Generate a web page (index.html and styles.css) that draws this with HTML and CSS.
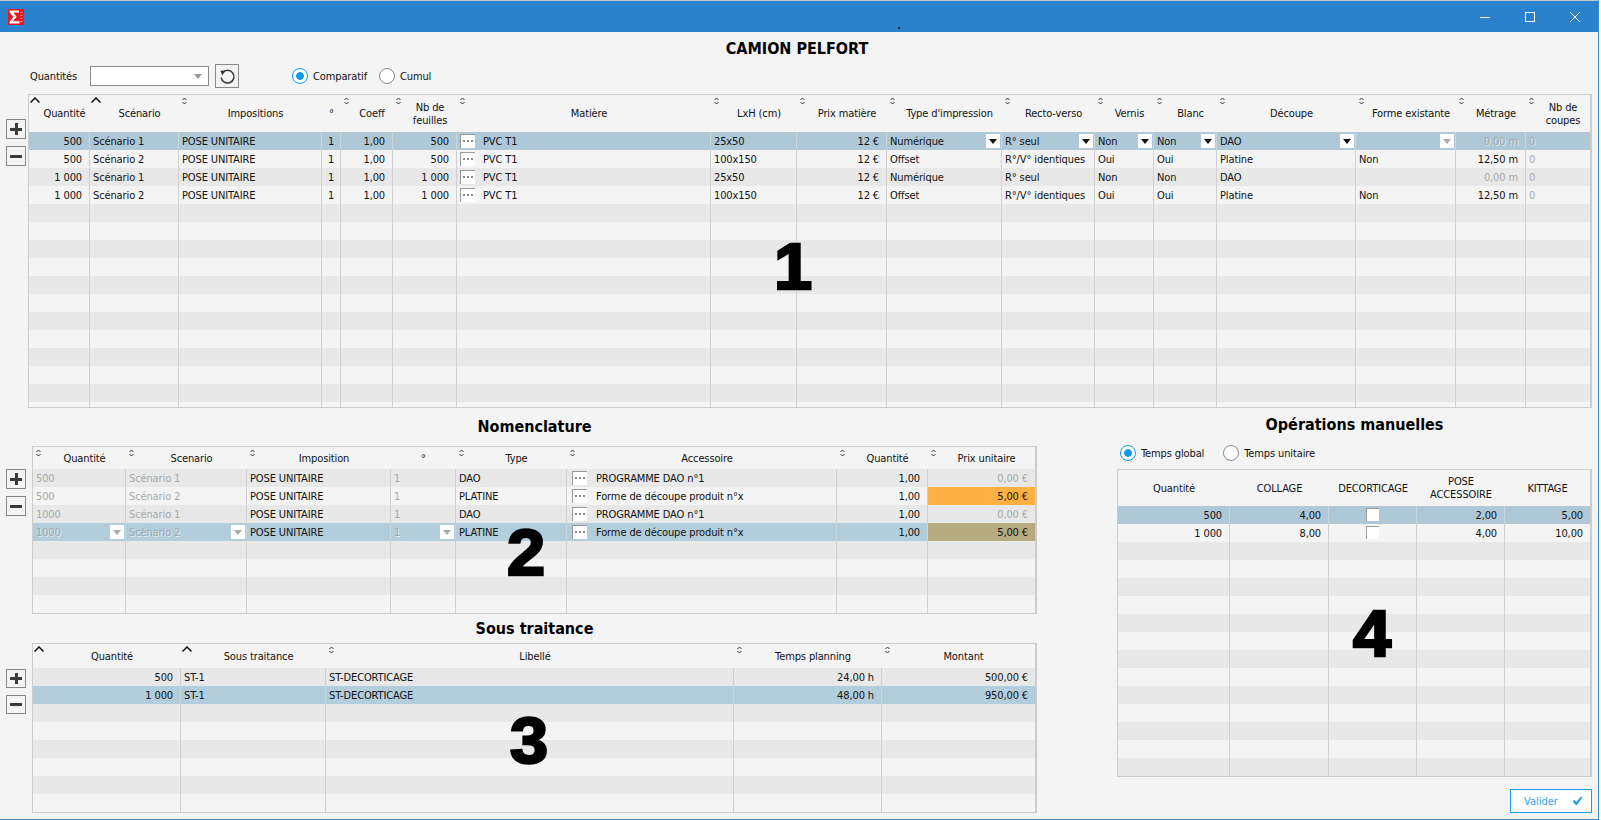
FILE: index.html
```html
<!DOCTYPE html>
<html>
<head>
<title>Camion Pelfort</title>
<link rel="stylesheet" href="styles.css">
</head>
<body>

<svg class="defs" width="0" height="0">
  <symbol id="sort" viewBox="0 0 5 8"><path d="M.5 3 2.5 1 4.5 3M.5 5 2.5 7 4.5 5" fill="none" stroke="#333"/></symbol>
  <symbol id="up" viewBox="0 0 10 6"><path d="M.5 5.5 5 1 9.5 5.5" fill="none" stroke="#111" stroke-width="1.5"/></symbol>
</svg>

<div class="window">
  <div class="titlebar">
    <svg class="logo" width="16" height="16" viewBox="0 0 16 16">
      <rect width="16" height="16" fill="#f0141e"/>
      <path d="M1.5 1.5H11V3.5H5.4L8.6 7.8 5 12.2H11.5V14.5H1.5V12.8L5.4 8 1.5 3.2Z" fill="#fff"/>
      <path d="M12.5 3h2v1h-2zM12.5 6h2v1h-2zM12.5 9h2v1h-2zM12.5 12h2v1h-2z" fill="#ffb0b0"/>
    </svg>
    <span class="speck"></span>
    <div class="winbtns">
      <svg width="10" height="10" viewBox="0 0 10 10"><path d="M0 5.5H10" stroke="#fff"/></svg>
      <svg width="10" height="10" viewBox="0 0 10 10"><rect x=".5" y=".5" width="9" height="9" fill="none" stroke="#fff"/></svg>
      <svg width="10" height="10" viewBox="0 0 10 10"><path d="M0 0 10 10M10 0 0 10" stroke="#fff"/></svg>
    </div>
  </div>

  <div class="main">
    <h1>CAMION PELFORT</h1>

    <div class="controls">
      <span class="ctl-label">Quantités</span>
      <span class="combo"></span>
      <button class="refresh">
        <svg width="17" height="17" viewBox="0 0 16 16"><path d="M3.4 4.4A6 6 0 1 1 2.1 9" fill="none" stroke="#333" stroke-width="1.4"/><path d="M1.4 2.6 6.4 2.4 3 6.8Z" fill="#333"/></svg>
      </button>
      <label class="radio on first">Comparatif</label>
      <label class="radio">Cumul</label>
    </div>

    <div class="block block-top">
      <div class="side side-1">
        <button class="pm plus"></button>
        <button class="pm minus"></button>
      </div>
      <div class="grid-wrap wrap-1">
        <table class="t1">
          <colgroup><col><col><col><col><col><col><col><col><col><col><col><col><col><col><col><col><col></colgroup>
          <thead><tr>
            <th><svg class="up"><use href="#up"/></svg>Quantité</th>
            <th><svg class="up"><use href="#up"/></svg>Scénario</th>
            <th><svg class="sort"><use href="#sort"/></svg>Impositions</th>
            <th class="plain">°</th>
            <th><svg class="sort"><use href="#sort"/></svg>Coeff</th>
            <th><svg class="sort"><use href="#sort"/></svg>Nb de<br>feuilles</th>
            <th><svg class="sort"><use href="#sort"/></svg>Matière</th>
            <th><svg class="sort"><use href="#sort"/></svg>LxH (cm)</th>
            <th><svg class="sort"><use href="#sort"/></svg>Prix matière</th>
            <th><svg class="sort"><use href="#sort"/></svg>Type d'impression</th>
            <th><svg class="sort"><use href="#sort"/></svg>Recto-verso</th>
            <th><svg class="sort"><use href="#sort"/></svg>Vernis</th>
            <th><svg class="sort"><use href="#sort"/></svg>Blanc</th>
            <th><svg class="sort"><use href="#sort"/></svg>Découpe</th>
            <th><svg class="sort"><use href="#sort"/></svg>Forme existante</th>
            <th><svg class="sort"><use href="#sort"/></svg>Métrage</th>
            <th><svg class="sort"><use href="#sort"/></svg>Nb de<br>coupes</th>
          </tr></thead>
          <tbody>
            <tr class="sel"><td class="r">500</td><td>Scénario 1</td><td>POSE UNITAIRE</td><td class="c">1</td><td class="r">1,00</td><td class="r">500</td><td class="pick"><i class="dots"></i>PVC T1</td><td>25x50</td><td class="r">12 €</td><td>Numérique<i class="dd"></i></td><td>R° seul<i class="dd"></i></td><td>Non<i class="dd"></i></td><td>Non<i class="dd"></i></td><td>DAO<i class="dd"></i></td><td><i class="dd off"></i></td><td class="r off">0,00 m</td><td class="off">0</td></tr>
            <tr><td class="r">500</td><td>Scénario 2</td><td>POSE UNITAIRE</td><td class="c">1</td><td class="r">1,00</td><td class="r">500</td><td class="pick"><i class="dots"></i>PVC T1</td><td>100x150</td><td class="r">12 €</td><td>Offset</td><td>R°/V° identiques</td><td>Oui</td><td>Oui</td><td>Platine</td><td>Non</td><td class="r">12,50 m</td><td class="off">0</td></tr>
            <tr><td class="r">1 000</td><td>Scénario 1</td><td>POSE UNITAIRE</td><td class="c">1</td><td class="r">1,00</td><td class="r">1 000</td><td class="pick"><i class="dots"></i>PVC T1</td><td>25x50</td><td class="r">12 €</td><td>Numérique</td><td>R° seul</td><td>Non</td><td>Non</td><td>DAO</td><td></td><td class="r off">0,00 m</td><td class="off">0</td></tr>
            <tr><td class="r">1 000</td><td>Scénario 2</td><td>POSE UNITAIRE</td><td class="c">1</td><td class="r">1,00</td><td class="r">1 000</td><td class="pick"><i class="dots"></i>PVC T1</td><td>100x150</td><td class="r">12 €</td><td>Offset</td><td>R°/V° identiques</td><td>Oui</td><td>Oui</td><td>Platine</td><td>Non</td><td class="r">12,50 m</td><td class="off">0</td></tr>
            <tr><td></td><td></td><td></td><td></td><td></td><td></td><td></td><td></td><td></td><td></td><td></td><td></td><td></td><td></td><td></td><td></td><td></td></tr>
            <tr><td></td><td></td><td></td><td></td><td></td><td></td><td></td><td></td><td></td><td></td><td></td><td></td><td></td><td></td><td></td><td></td><td></td></tr>
            <tr><td></td><td></td><td></td><td></td><td></td><td></td><td></td><td></td><td></td><td></td><td></td><td></td><td></td><td></td><td></td><td></td><td></td></tr>
            <tr><td></td><td></td><td></td><td></td><td></td><td></td><td></td><td></td><td></td><td></td><td></td><td></td><td></td><td></td><td></td><td></td><td></td></tr>
            <tr><td></td><td></td><td></td><td></td><td></td><td></td><td></td><td></td><td></td><td></td><td></td><td></td><td></td><td></td><td></td><td></td><td></td></tr>
            <tr><td></td><td></td><td></td><td></td><td></td><td></td><td></td><td></td><td></td><td></td><td></td><td></td><td></td><td></td><td></td><td></td><td></td></tr>
            <tr><td></td><td></td><td></td><td></td><td></td><td></td><td></td><td></td><td></td><td></td><td></td><td></td><td></td><td></td><td></td><td></td><td></td></tr>
            <tr><td></td><td></td><td></td><td></td><td></td><td></td><td></td><td></td><td></td><td></td><td></td><td></td><td></td><td></td><td></td><td></td><td></td></tr>
            <tr><td></td><td></td><td></td><td></td><td></td><td></td><td></td><td></td><td></td><td></td><td></td><td></td><td></td><td></td><td></td><td></td><td></td></tr>
            <tr><td></td><td></td><td></td><td></td><td></td><td></td><td></td><td></td><td></td><td></td><td></td><td></td><td></td><td></td><td></td><td></td><td></td></tr>
            <tr><td></td><td></td><td></td><td></td><td></td><td></td><td></td><td></td><td></td><td></td><td></td><td></td><td></td><td></td><td></td><td></td><td></td></tr>
            <tr><td></td><td></td><td></td><td></td><td></td><td></td><td></td><td></td><td></td><td></td><td></td><td></td><td></td><td></td><td></td><td></td><td></td></tr>
          </tbody>
        </table>
        <span class="bignum n1">1</span>
      </div>
    </div>

    <div class="lower">
      <div class="lower-left">
        <h2>Nomenclature</h2>
        <div class="block">
          <div class="side side-2">
            <button class="pm plus"></button>
            <button class="pm minus"></button>
          </div>
          <div class="grid-wrap wrap-2">
            <table class="t2">
              <colgroup><col><col><col><col><col><col><col><col></colgroup>
              <thead><tr>
                <th><svg class="sort"><use href="#sort"/></svg>Quantité</th>
                <th><svg class="sort"><use href="#sort"/></svg>Scenario</th>
                <th><svg class="sort"><use href="#sort"/></svg>Imposition</th>
                <th class="plain">°</th>
                <th><svg class="sort"><use href="#sort"/></svg>Type</th>
                <th><svg class="sort"><use href="#sort"/></svg>Accessoire</th>
                <th><svg class="sort"><use href="#sort"/></svg>Quantité</th>
                <th><svg class="sort"><use href="#sort"/></svg>Prix unitaire</th>
              </tr></thead>
              <tbody>
                <tr><td class="off">500</td><td class="off">Scénario 1</td><td>POSE UNITAIRE</td><td class="off">1</td><td>DAO</td><td class="pick"><i class="dots"></i>PROGRAMME DAO n°1</td><td class="r">1,00</td><td class="r off">0,00 €</td></tr>
                <tr><td class="off">500</td><td class="off">Scénario 2</td><td>POSE UNITAIRE</td><td class="off">1</td><td>PLATINE</td><td class="pick"><i class="dots"></i>Forme de découpe produit n°x</td><td class="r">1,00</td><td class="r warn">5,00 €</td></tr>
                <tr><td class="off">1000</td><td class="off">Scénario 1</td><td>POSE UNITAIRE</td><td class="off">1</td><td>DAO</td><td class="pick"><i class="dots"></i>PROGRAMME DAO n°1</td><td class="r">1,00</td><td class="r off">0,00 €</td></tr>
                <tr class="sel"><td class="off">1000<i class="dd off"></i></td><td class="off">Scénario 2<i class="dd off"></i></td><td>POSE UNITAIRE</td><td class="off">1<i class="dd off"></i></td><td>PLATINE</td><td class="pick"><i class="dots"></i>Forme de découpe produit n°x</td><td class="r">1,00</td><td class="r warn">5,00 €</td></tr>
                <tr><td></td><td></td><td></td><td></td><td></td><td></td><td></td><td></td></tr>
                <tr><td></td><td></td><td></td><td></td><td></td><td></td><td></td><td></td></tr>
                <tr><td></td><td></td><td></td><td></td><td></td><td></td><td></td><td></td></tr>
                <tr><td></td><td></td><td></td><td></td><td></td><td></td><td></td><td></td></tr>
              </tbody>
            </table>
            <span class="bignum n2">2</span>
          </div>
        </div>

        <h2 class="h2-sub">Sous traitance</h2>
        <div class="block">
          <div class="side side-3">
            <button class="pm plus"></button>
            <button class="pm minus"></button>
          </div>
          <div class="grid-wrap wrap-3">
            <table class="t3">
              <colgroup><col><col><col><col><col></colgroup>
              <thead><tr>
                <th><svg class="up"><use href="#up"/></svg>Quantité</th>
                <th><svg class="up"><use href="#up"/></svg>Sous traitance</th>
                <th><svg class="sort"><use href="#sort"/></svg>Libellé</th>
                <th><svg class="sort"><use href="#sort"/></svg>Temps planning</th>
                <th><svg class="sort"><use href="#sort"/></svg>Montant</th>
              </tr></thead>
              <tbody>
                <tr><td class="r">500</td><td>ST-1</td><td>ST-DECORTICAGE</td><td class="r">24,00 h</td><td class="r">500,00 €</td></tr>
                <tr class="sel"><td class="r">1 000</td><td>ST-1</td><td>ST-DECORTICAGE</td><td class="r">48,00 h</td><td class="r">950,00 €</td></tr>
                <tr><td></td><td></td><td></td><td></td><td></td></tr>
                <tr><td></td><td></td><td></td><td></td><td></td></tr>
                <tr><td></td><td></td><td></td><td></td><td></td></tr>
                <tr><td></td><td></td><td></td><td></td><td></td></tr>
                <tr><td></td><td></td><td></td><td></td><td></td></tr>
                <tr><td></td><td></td><td></td><td></td><td></td></tr>
              </tbody>
            </table>
            <span class="bignum n3">3</span>
          </div>
        </div>
      </div>

      <div class="lower-right">
        <h2 class="h2-ops">Opérations manuelles</h2>
        <div class="radios">
          <label class="radio on">Temps global</label>
          <label class="radio">Temps unitaire</label>
        </div>
        <div class="grid-wrap wrap-4">
          <table class="t4">
            <colgroup><col><col><col><col><col></colgroup>
            <thead><tr>
              <th class="plain">Quantité</th>
              <th class="plain">COLLAGE</th>
              <th class="plain">DECORTICAGE</th>
              <th class="plain">POSE<br>ACCESSOIRE</th>
              <th class="plain">KITTAGE</th>
            </tr></thead>
            <tbody>
              <tr class="sel"><td class="r">500</td><td class="r">4,00</td><td class="c"><i class="check"></i></td><td class="r">2,00</td><td class="r">5,00</td></tr>
              <tr><td class="r">1 000</td><td class="r">8,00</td><td class="c"><i class="check"></i></td><td class="r">4,00</td><td class="r">10,00</td></tr>
              <tr><td></td><td></td><td></td><td></td><td></td></tr>
              <tr><td></td><td></td><td></td><td></td><td></td></tr>
              <tr><td></td><td></td><td></td><td></td><td></td></tr>
              <tr><td></td><td></td><td></td><td></td><td></td></tr>
              <tr><td></td><td></td><td></td><td></td><td></td></tr>
              <tr><td></td><td></td><td></td><td></td><td></td></tr>
              <tr><td></td><td></td><td></td><td></td><td></td></tr>
              <tr><td></td><td></td><td></td><td></td><td></td></tr>
              <tr><td></td><td></td><td></td><td></td><td></td></tr>
              <tr><td></td><td></td><td></td><td></td><td></td></tr>
              <tr><td></td><td></td><td></td><td></td><td></td></tr>
              <tr><td></td><td></td><td></td><td></td><td></td></tr>
              <tr><td></td><td></td><td></td><td></td><td></td></tr>
            </tbody>
          </table>
          <span class="bignum n4">4</span>
        </div>
        <div class="actions">
          <button class="valider">Valider
            <svg width="11" height="10" viewBox="0 0 11 10"><path d="M.6 5.4 2.4 3.8 4.2 6 9 .4 10.4 1.6 4.4 9.6Z" fill="#1b9ce6"/></svg>
          </button>
        </div>
      </div>
    </div>
  </div>
</div>

</body>
</html>
```

FILE: styles.css
```css
* { box-sizing: border-box; }
html, body { margin: 0; height: 100%; background-color: #fff; overflow: hidden; }
body { font-family: "DejaVu Sans Condensed", "DejaVu Sans", sans-serif; font-size: 11px; letter-spacing: -.12px; color: #111; }
.defs { position: absolute; }

.window { width: 1599px; height: 820px; background-color: #f4f4f4; border-right: 1px solid #3a8ad0; border-bottom: 1px solid #3a8ad0; }

/* Title bar */
.titlebar { position: relative; display: flex; align-items: center; height: 32px; padding: 1px 0 0 8px; background-color: #2a82cc; border-top: 1px solid #c4c8cc; }
.speck { position: absolute; left: 898px; top: 26px; width: 2px; height: 2px; background-color: #123; }
.winbtns { display: flex; gap: 35px; margin-left: auto; margin-right: 18px; }
.winbtns svg { display: block; }

/* Main */
.main { padding-left: 6px; }
h1 { margin: 0; height: 32px; padding-right: 10px; font-size: 16px; line-height: 34px; letter-spacing: 0; text-align: center; font-weight: bold; color: #000; }
h2 { margin: 0 0 0 26px; height: 38px; font-size: 16px; line-height: 38px; letter-spacing: 0; text-align: center; font-weight: bold; color: #000; }
h2.h2-sub { height: 29px; line-height: 30px; }
h2.h2-ops { margin: 0; height: 32px; line-height: 34px; }

.controls { display: flex; align-items: center; height: 24px; margin-bottom: 6px; padding-left: 24px; }
.ctl-label { width: 60px; }
.combo { position: relative; width: 119px; height: 20px; background-color: #fff; border: 1px solid #888; }
.combo::after { content: ""; position: absolute; right: 6px; top: 7px; border: 4px solid transparent; border-top: 5px solid #999; border-bottom: 0; }
.refresh { display: flex; align-items: center; justify-content: center; width: 24px; height: 24px; margin-left: 6px; padding: 0; background-color: #f4f4f4; border: 1px solid #888; }

.radio { display: flex; align-items: center; margin-right: 12px; }
.radio::before { content: ""; width: 14px; height: 14px; margin-right: 5px; border: 1px solid #888; border-radius: 50%; background-color: #fff; }
.radio.on::before { border-color: #0f9be8; background: radial-gradient(circle, #0f9be8 0, #0f9be8 3.5px, #fff 4.2px); }
.radio.first { margin-left: 53px; }

.block { display: flex; }
.side { display: flex; flex-direction: column; gap: 7px; width: 20px; margin-right: 6px; }
.block-top .side { margin-right: 2px; }
.side-1 { padding-top: 25px; }
.side-2 { padding-top: 23px; }
.side-3 { padding-top: 26px; }
.pm { position: relative; width: 20px; height: 20px; padding: 0; background-color: #f4f4f4; border: 1px solid #888; }
.side-3 .pm { height: 19px; }
.pm::before { content: ""; position: absolute; left: 3px; right: 3px; top: 50%; height: 3px; margin-top: -1.5px; background-color: #3a3a3a; }
.plus::after { content: ""; position: absolute; top: 3px; bottom: 3px; left: 50%; width: 3px; margin-left: -1.5px; background-color: #3a3a3a; }

/* Data grids */
.grid-wrap { position: relative; overflow: hidden; border: 1px solid #ccc; border-right-width: 2px; }
.wrap-1 { width: 1564px; height: 314px; }
.wrap-2 { width: 1005px; height: 168px; }
.wrap-3 { width: 1005px; height: 170px; }
.wrap-4 { width: 475px; height: 308px; }

table { table-layout: fixed; width: 100%; border-collapse: separate; border-spacing: 0; }
th { position: relative; padding: 0 0 0 10px; font-weight: normal; line-height: 13px; text-align: center; overflow: hidden; white-space: nowrap; }
th.plain { padding: 0; }
.t1 th { height: 37px; }
.t2 th { height: 22px; }
.t3 th { height: 24px; }
.t4 th { height: 36px; }
.sort { position: absolute; left: 3px; top: 2px; width: 5px; height: 8px; }
.up { position: absolute; left: 1px; top: 2px; width: 10px; height: 6px; }

td { position: relative; height: 18px; padding: 0 3px; line-height: 17px; white-space: nowrap; overflow: hidden; border-right: 1px solid #d0d0d0; }
td:last-child { border-right: 0; }
tbody tr:nth-child(odd) td { background-color: #e8e8e8; }
tbody tr:nth-child(even) td { background-color: #f4f4f4; }
tbody tr.sel td { background-color: #aec8d7; border-right-color: #c9d6dd; }
.t2 tr.sel td, .t3 tr.sel td { background-color: #b2cddc; }
td.r { padding-right: 7px; text-align: right; }
td.c { text-align: center; }
td.off { color: #a8a8a8; }
tr.sel td.off { color: #a3a9ad; text-shadow: 1px 1px 0 #dfe8ee; }
tbody tr td.warn { background-color: #ffb142; }
tbody tr.sel td.warn { background-color: #b6aa80; }

.t1 col:nth-child(1) { width: 61px; }
.t1 col:nth-child(2) { width: 89px; }
.t1 col:nth-child(3) { width: 143px; }
.t1 col:nth-child(4) { width: 19px; }
.t1 col:nth-child(5) { width: 52px; }
.t1 col:nth-child(6) { width: 64px; }
.t1 col:nth-child(7) { width: 254px; }
.t1 col:nth-child(8) { width: 86px; }
.t1 col:nth-child(9) { width: 90px; }
.t1 col:nth-child(10) { width: 115px; }
.t1 col:nth-child(11) { width: 93px; }
.t1 col:nth-child(12) { width: 59px; }
.t1 col:nth-child(13) { width: 63px; }
.t1 col:nth-child(14) { width: 139px; }
.t1 col:nth-child(15) { width: 100px; }
.t1 col:nth-child(16) { width: 70px; }
.t1 col:nth-child(17) { width: 64px; }

.t2 col:nth-child(1) { width: 93px; }
.t2 col:nth-child(2) { width: 121px; }
.t2 col:nth-child(3) { width: 144px; }
.t2 col:nth-child(4) { width: 65px; }
.t2 col:nth-child(5) { width: 111px; }
.t2 col:nth-child(6) { width: 270px; }
.t2 col:nth-child(7) { width: 91px; }
.t2 col:nth-child(8) { width: 107px; }

.t3 col:nth-child(1) { width: 148px; }
.t3 col:nth-child(2) { width: 145px; }
.t3 col:nth-child(3) { width: 408px; }
.t3 col:nth-child(4) { width: 148px; }
.t3 col:nth-child(5) { width: 153px; }

.t4 col:nth-child(1) { width: 112px; }
.t4 col:nth-child(2) { width: 99px; }
.t4 col:nth-child(3) { width: 88px; }
.t4 col:nth-child(4) { width: 88px; }
.t4 col:nth-child(5) { width: 85px; }

/* Cell widgets */
.dd { position: absolute; right: 1px; top: 2px; width: 14px; height: 14px; background-color: #fff; }
.dd::after { content: ""; position: absolute; left: 3px; top: 5px; border: 4px solid transparent; border-top: 5px solid #111; border-bottom: 0; }
.dd.off::after { border-top-color: #aaa; }
.dots { display: inline-block; width: 15px; height: 14px; margin-right: 7px; vertical-align: -3px; background: #fff radial-gradient(circle, #888 1px, transparent 1.4px) 1px 4px / 4px 4px repeat-x; border-left: 1px solid #999; border-top: 1px solid #999; }
td.pick { padding-left: 3px; }
.t1 .dots { margin-right: 8px; }
.t2 td.pick { padding-left: 5px; }
.t2 .dots { margin-right: 9px; }
.check { display: inline-block; width: 13px; height: 13px; vertical-align: -2px; background-color: #fff; border-left: 1px solid #999; border-top: 1px solid #999; }

/* Big section numbers drawn over the grids */
.bignum { position: absolute; font-family: "Liberation Sans", Arial, sans-serif; font-size: 64px; font-weight: bold; line-height: 64px; letter-spacing: 0; color: #000; -webkit-text-stroke: 2.5px #000; transform: scaleX(1.07); transform-origin: left center; }
.n1 { left: 745px; top: 140px; }
.n2 { left: 474px; top: 74px; }
.n3 { left: 477px; top: 65px; }
.n4 { left: 235px; top: 132px; }

/* Lower part */
.lower { display: grid; grid-template-columns: 1031px 475px; column-gap: 80px; }
.radios { display: flex; align-items: center; height: 26px; margin-bottom: 3px; padding-left: 3px; }
.radios .radio { margin-right: 19px; }
.actions { display: flex; justify-content: flex-end; margin-top: 12px; }
.valider { display: flex; align-items: center; justify-content: space-between; width: 82px; height: 24px; padding: 0 8px 0 13px; font: inherit; color: #2fa5e6; background-color: #fff; border: 1px solid #1b9ce6; }
```
